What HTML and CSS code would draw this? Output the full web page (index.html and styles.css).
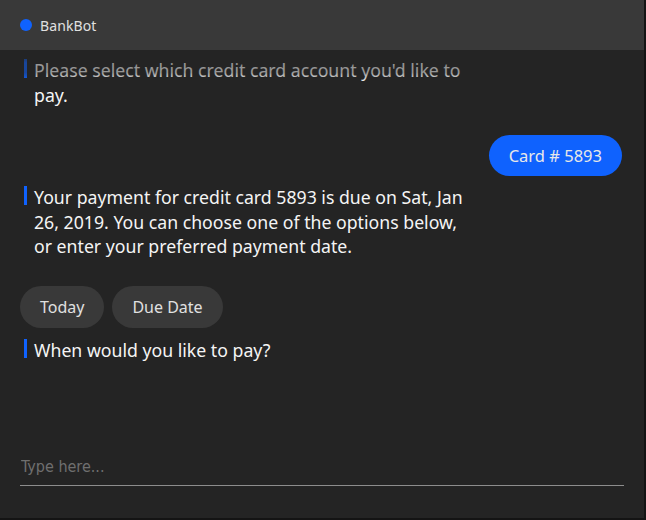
FILE: index.html
```html
<!DOCTYPE html>
<html lang="en">
<head>
<meta charset="utf-8">
<title>BankBot</title>
<link rel="stylesheet" href="styles.css">
</head>
<body>
<div class="app">
  <header class="header">
    <span class="dot"></span>
    <span class="title">BankBot</span>
  </header>
  <main class="chat">
    <div class="fade"></div>
    <div class="messages">
      <div class="bot first">
        <span class="bar"></span>
        <p class="text">Please select which credit card account you'd like to pay.</p>
      </div>
      <div class="user-row">
        <span class="user-bubble">Card # 5893</span>
      </div>
      <div class="bot second">
        <span class="bar"></span>
        <p class="text">Your payment for credit card 5893 is due on Sat, Jan 26, 2019. You can choose one of the options below, or enter your preferred payment date.</p>
      </div>
      <div class="options">
        <button class="option">Today</button>
        <button class="option">Due Date</button>
      </div>
      <div class="bot third">
        <span class="bar"></span>
        <p class="text">When would you like to pay?</p>
      </div>
    </div>
    <div class="composer">
      <input class="input" type="text" placeholder="Type here...">
    </div>
  </main>
</div>
</body>
</html>
```
FILE: styles.css
```css
* { box-sizing: border-box; }
html, body {
  margin: 0;
  padding: 0;
  background: #141414;
}
body {
  width: 646px;
  height: 520px;
  overflow: hidden;
  font-family: "Noto Sans", "Open Sans", sans-serif;
}
.app {
  width: 644px;
  height: 518px;
  background: #242424;
  display: flex;
  flex-direction: column;
}
.header {
  height: 50px;
  flex: none;
  background: #393939;
  display: flex;
  align-items: center;
  padding-left: 20px;
  gap: 8px;
}
.dot {
  width: 12px;
  height: 12px;
  border-radius: 50%;
  background: #0f62fe;
}
.title {
  color: #e0e0e0;
  font-size: 14px;
  letter-spacing: 0.1px;
}
.chat {
  position: relative;
  flex: 1;
  display: flex;
  flex-direction: column;
}
.fade {
  position: absolute;
  left: 0;
  right: 0;
  top: 0;
  height: 32px;
  background: linear-gradient(#242424 0%, rgba(36,36,36,0.45) 40%, rgba(36,36,36,0.45) 70%, rgba(36,36,36,0) 100%);
  pointer-events: none;
}
.messages {
  flex: 1;
  padding: 8px 22px 0 24px;
}
.bot {
  display: flex;
  align-items: flex-start;
  gap: 7px;
}
.bar {
  flex: none;
  width: 3px;
  height: 19px;
  margin-top: 1px;
  background: #0f62fe;
}
.text {
  margin: 0;
  width: 445px;
  color: #f4f4f4;
  font-size: 17.7px;
  line-height: 24.5px;
}
.user-row {
  display: flex;
  justify-content: flex-end;
  margin-top: 28px;
}
.user-bubble {
  height: 41px;
  padding: 0 20px;
  border-radius: 21px;
  background: #0f62fe;
  color: #e8e8e8;
  font-size: 16.5px;
  display: flex;
  align-items: center;
}
.second { margin-top: 9px; }
.options {
  display: flex;
  gap: 8px;
  margin-top: 27px;
  margin-left: -4px;
}
.option {
  height: 42px;
  padding: 0 20px;
  border: none;
  border-radius: 21px;
  background: #393939;
  color: #e0e0e0;
  font-family: inherit;
  font-size: 16px;
}
.third { margin-top: 10px; }
.composer {
  padding: 0 20px 32px 20px;
}
.input {
  width: 100%;
  height: 38px;
  border: none;
  border-bottom: 1px solid #8d8d8d;
  background: transparent;
  padding: 0 1px;
  font-family: "Liberation Sans Narrow", "DejaVu Sans Condensed", sans-serif;
  font-size: 16px;
  color: #f4f4f4;
  outline: none;
}
.input::placeholder { color: #6f6f6f; }
```
